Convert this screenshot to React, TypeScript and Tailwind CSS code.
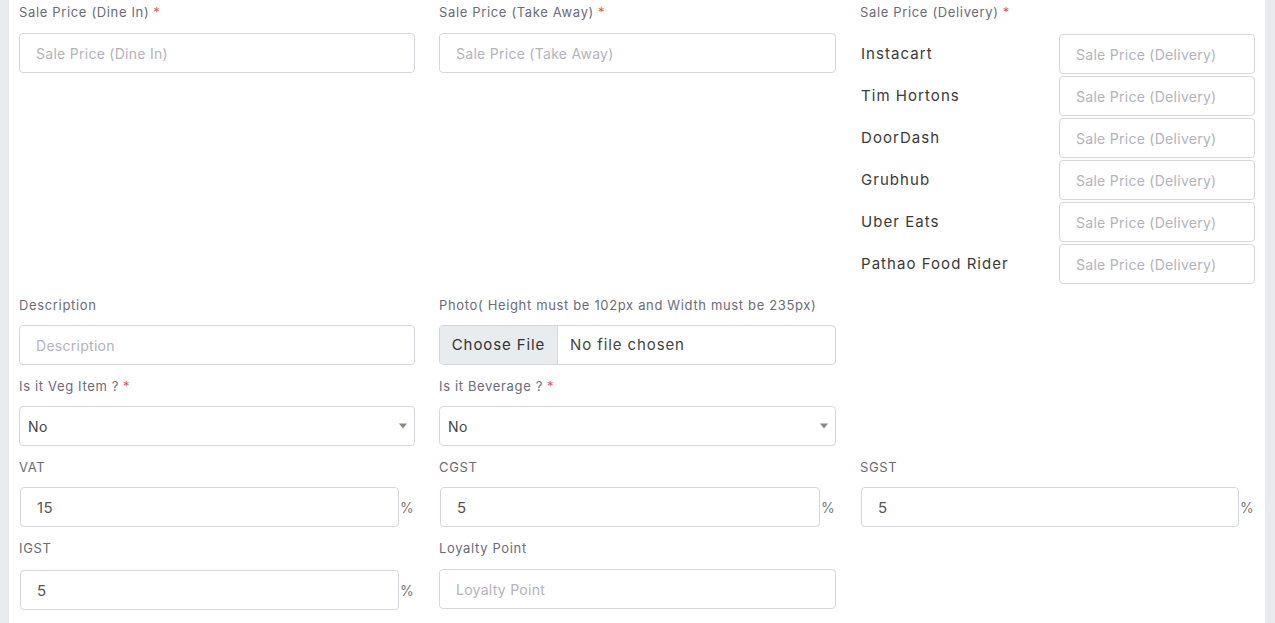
import React from "react";

const deliveryApps = ["Instacart", "Tim Hortons", "DoorDash", "Grubhub", "Uber Eats", "Pathao Food Rider"];

function Label({ text, required, top }: { text: string; required?: boolean; top?: boolean }) {
  return (
    <label
      className={
        "block h-5 leading-5 text-[13px] tracking-[0.05em] text-[#6b6b7b] mb-[11px] " +
        (top ? "" : "translate-y-px")
      }
    >
      {text}
      {required && <span className="text-[#f0564b] ml-1">*</span>}
    </label>
  );
}

function TextInput({ placeholder, value }: { placeholder?: string; value?: string }) {
  return (
    <input
      type="text"
      placeholder={placeholder}
      defaultValue={value}
      className="block w-full h-10 rounded border border-[#d6d6de] bg-white px-4 text-[14px] tracking-[0.02em] text-[#555] placeholder:text-[#b3b3bb] outline-none"
    />
  );
}

function SelectBox() {
  return (
    <div className="relative h-10 w-full rounded border border-[#d6d6de] bg-white flex items-center pl-2 text-[14px] tracking-[0.03em] text-[#444]">
      No
      <span className="absolute right-[7px] top-1/2 -translate-y-1/2 w-0 h-0 border-l-[4px] border-r-[4px] border-t-[5px] border-l-transparent border-r-transparent border-t-[#888]" />
    </div>
  );
}

function PercentInput({ value }: { value: string }) {
  return (
    <div className="flex items-center">
      <input
        type="text"
        defaultValue={value}
        className="block flex-1 min-w-0 h-10 ml-px rounded border border-[#d6d6de] bg-white px-4 text-[15px] tracking-[0.03em] text-[#555] outline-none"
      />
      <span className="w-4 pl-px text-[14px] text-[#777]">%</span>
    </div>
  );
}

function Field({ children }: { children: React.ReactNode }) {
  return <div className="mb-[10px]">{children}</div>;
}

export default function App() {
  return (
    <div className="min-h-screen bg-[#eaebef] pl-[9px] pr-[10px] font-['Inter',sans-serif]">
      <div className="bg-white min-h-[623px] px-[10px] pt-[2px]">
        <div className="grid grid-cols-[396px_397px_395px] gap-x-6 items-start">
          <Field>
            <Label text="Sale Price (Dine In)" required top />
            <TextInput placeholder="Sale Price (Dine In)" />
          </Field>
          <Field>
            <Label text="Sale Price (Take Away)" required top />
            <TextInput placeholder="Sale Price (Take Away)" />
          </Field>
          <Field>
            <Label text="Sale Price (Delivery)" required top />
            <div className="flex flex-col gap-[2px] pt-px">
              {deliveryApps.map((name) => (
                <div key={name} className="flex items-center">
                  <span className="flex-1 pl-px text-[15px] tracking-[0.07em] text-[#3a3a3a]">{name}</span>
                  <div className="w-[196px]">
                    <TextInput placeholder="Sale Price (Delivery)" />
                  </div>
                </div>
              ))}
            </div>
          </Field>

          <Field>
            <Label text="Description" />
            <TextInput placeholder="Description" />
          </Field>
          <Field>
            <Label text="Photo( Height must be 102px and Width must be 235px)" />
            <div className="flex h-10 w-full rounded border border-[#d6d6de] bg-white overflow-hidden text-[15px] tracking-[0.06em]">
              <span className="w-[118px] bg-[#e9ecef] border-r border-[#d6d6de] flex items-center justify-center text-[#333]">
                Choose File
              </span>
              <span className="flex items-center pl-3 text-[#444]">No file chosen</span>
            </div>
          </Field>
          <div />

          <Field>
            <Label text="Is it Veg Item ?" required />
            <SelectBox />
          </Field>
          <Field>
            <Label text="Is it Beverage ?" required />
            <SelectBox />
          </Field>
          <div />

          <Field>
            <Label text="VAT" />
            <PercentInput value="15" />
          </Field>
          <Field>
            <Label text="CGST" />
            <PercentInput value="5" />
          </Field>
          <Field>
            <Label text="SGST" />
            <PercentInput value="5" />
          </Field>

          <Field>
            <Label text="IGST" />
            <div className="pt-[2px]">
              <PercentInput value="5" />
            </div>
          </Field>
          <Field>
            <Label text="Loyalty Point" />
            <div className="pt-px">
              <TextInput placeholder="Loyalty Point" />
            </div>
          </Field>
          <div />
        </div>
      </div>
    </div>
  );
}
